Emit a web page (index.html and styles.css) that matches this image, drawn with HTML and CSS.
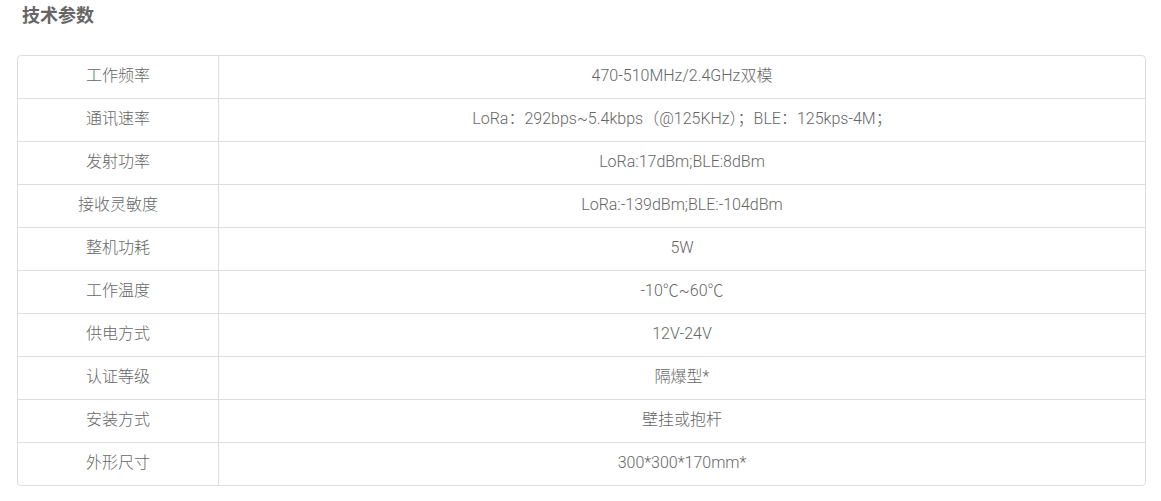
FILE: index.html
```html
<!DOCTYPE html>
<html lang="zh-CN">
<head>
<meta charset="utf-8">
<title>技术参数</title>
<link rel="stylesheet" href="styles.css">
</head>
<body>
<div class="page">
  <h2 class="title">技术参数</h2>
  <div class="spec-wrap">
    <table class="spec">
      <tbody>
        <tr><td class="k">工作频率</td><td class="v">470-510MHz/2.4GHz双模</td></tr>
        <tr><td class="k">通讯速率</td><td class="v">LoRa：292bps~5.4kbps（@125KHz）；BLE：125kps-4M；</td></tr>
        <tr><td class="k">发射功率</td><td class="v">LoRa:17dBm;BLE:8dBm</td></tr>
        <tr><td class="k">接收灵敏度</td><td class="v">LoRa:-139dBm;BLE:-104dBm</td></tr>
        <tr><td class="k">整机功耗</td><td class="v">5W</td></tr>
        <tr><td class="k">工作温度</td><td class="v">-10℃~60℃</td></tr>
        <tr><td class="k">供电方式</td><td class="v">12V-24V</td></tr>
        <tr><td class="k">认证等级</td><td class="v">隔爆型*</td></tr>
        <tr><td class="k">安装方式</td><td class="v">壁挂或抱杆</td></tr>
        <tr><td class="k">外形尺寸</td><td class="v">300*300*170mm*</td></tr>
      </tbody>
    </table>
  </div>
</div>
</body>
</html>
```
FILE: styles.css
```css
html, body {
  margin: 0;
  padding: 0;
  background: #fff;
}
.page {
  padding: 0 15px 0 17px;
  font-family: Roboto, "Noto Sans CJK SC", sans-serif;
  color: #666;
}
.title {
  margin: 0;
  padding: 4px 0 0 5px;
  height: 55px;
  box-sizing: border-box;
  font-size: 18px;
  line-height: 24px;
  font-weight: bold;
  color: #666;
}
.spec-wrap {
  width: 1129px;
  border: 1px solid #ddd;
  border-radius: 4px;
  box-sizing: border-box;
  overflow: hidden;
}
.spec {
  width: 100%;
  border-collapse: collapse;
  border-spacing: 0;
}
.spec td {
  height: 39px;
  box-sizing: content-box;
  padding: 0 0 3px;
  text-align: center;
  vertical-align: middle;
  font-size: 16px;
  line-height: 20px;
  font-weight: 300;
  color: #666;
  border-top: 1px solid #ddd;
}
.spec tr:first-child td {
  border-top: none;
}
.spec td.k {
  width: 200px;
}
.spec td.v {
  border-left: 1px solid #ddd;
}
```
